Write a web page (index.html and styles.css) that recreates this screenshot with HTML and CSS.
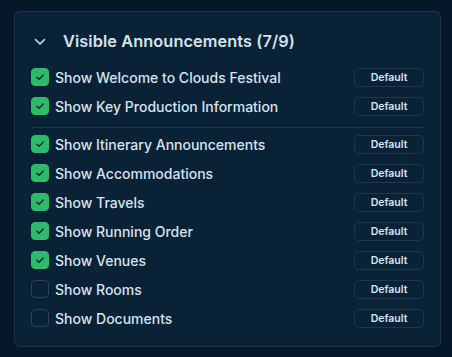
FILE: index.html
```html
<!DOCTYPE html>
<html>
<head>
<meta charset="utf-8">
<link rel="stylesheet" href="styles.css">
</head>
<body>
<section class="card">
  <header class="head">
    <svg class="chev" width="12" height="8" viewBox="0 0 12 8"><path d="M1.5 1.5 L6 6 L10.5 1.5" fill="none" stroke="#c9dcf0" stroke-width="1.6" stroke-linecap="round" stroke-linejoin="round"/></svg>
    <h2 class="title">Visible Announcements (7/9)</h2>
  </header>
  <div class="group">
    <div class="row"><span class="cb on"><svg viewBox="0 0 18 18"><path d="M5.5 9.2 L8 11.6 L12.6 6.8" fill="none" stroke="#0d2a22" stroke-width="1.6" stroke-linecap="round" stroke-linejoin="round"/></svg></span><span class="label">Show Welcome to Clouds Festival</span><button class="btn">Default</button></div>
    <div class="row"><span class="cb on"><svg viewBox="0 0 18 18"><path d="M5.5 9.2 L8 11.6 L12.6 6.8" fill="none" stroke="#0d2a22" stroke-width="1.6" stroke-linecap="round" stroke-linejoin="round"/></svg></span><span class="label">Show Key Production Information</span><button class="btn">Default</button></div>
  </div>
  <div class="sep"></div>
  <div class="group">
    <div class="row"><span class="cb on"><svg viewBox="0 0 18 18"><path d="M5.5 9.2 L8 11.6 L12.6 6.8" fill="none" stroke="#0d2a22" stroke-width="1.6" stroke-linecap="round" stroke-linejoin="round"/></svg></span><span class="label">Show Itinerary Announcements</span><button class="btn">Default</button></div>
    <div class="row"><span class="cb on"><svg viewBox="0 0 18 18"><path d="M5.5 9.2 L8 11.6 L12.6 6.8" fill="none" stroke="#0d2a22" stroke-width="1.6" stroke-linecap="round" stroke-linejoin="round"/></svg></span><span class="label">Show Accommodations</span><button class="btn">Default</button></div>
    <div class="row"><span class="cb on"><svg viewBox="0 0 18 18"><path d="M5.5 9.2 L8 11.6 L12.6 6.8" fill="none" stroke="#0d2a22" stroke-width="1.6" stroke-linecap="round" stroke-linejoin="round"/></svg></span><span class="label">Show Travels</span><button class="btn">Default</button></div>
    <div class="row"><span class="cb on"><svg viewBox="0 0 18 18"><path d="M5.5 9.2 L8 11.6 L12.6 6.8" fill="none" stroke="#0d2a22" stroke-width="1.6" stroke-linecap="round" stroke-linejoin="round"/></svg></span><span class="label">Show Running Order</span><button class="btn">Default</button></div>
    <div class="row"><span class="cb on"><svg viewBox="0 0 18 18"><path d="M5.5 9.2 L8 11.6 L12.6 6.8" fill="none" stroke="#0d2a22" stroke-width="1.6" stroke-linecap="round" stroke-linejoin="round"/></svg></span><span class="label">Show Venues</span><button class="btn">Default</button></div>
    <div class="row"><span class="cb"></span><span class="label">Show Rooms</span><button class="btn">Default</button></div>
    <div class="row"><span class="cb"></span><span class="label">Show Documents</span><button class="btn">Default</button></div>
  </div>
</section>
</body>
</html>
```
FILE: styles.css
```css
html, body {
  margin: 0;
  padding: 0;
  background: #051729;
  font-family: Inter, "Noto Sans", sans-serif;
  color: #d8e4f0;
}
body {
  padding: 11px 12px 10px 14px;
}
.card {
  box-sizing: border-box;
  width: 427px;
  height: 336px;
  background: #0a2236;
  border: 1px solid #1d3549;
  border-radius: 6px;
  padding: 17px 15px 0 16px;
}
.head {
  display: flex;
  align-items: center;
  height: 23px;
  margin-bottom: 10.5px;
}
.chev {
  margin-left: 3px;
  margin-top: 2px;
  width: 12px;
  height: 8px;
}
.title {
  margin: 0 0 0 17px;
  font-size: 16.3px;
  font-weight: 600;
  color: #d3e2f2;
  letter-spacing: 0.1px;
}
.group {
  display: flex;
  flex-direction: column;
}
.row {
  display: flex;
  align-items: center;
  height: 29px;
}
.cb {
  box-sizing: border-box;
  width: 18px;
  height: 18px;
  border-radius: 4px;
  border: 1px solid #2c4459;
  flex: none;
}
.cb.on {
  background: #2dba6c;
  border-color: #2dba6c;
}
.cb svg {
  display: block;
  width: 16px;
  height: 16px;
}
.label {
  margin-left: 6px;
  font-size: 14px;
  font-weight: 500;
  color: #d6e3f0;
  flex: 1;
}
.btn {
  box-sizing: border-box;
  width: 70px;
  height: 19px;
  margin-right: 1px;
  background: transparent;
  border: 1px solid #1f374c;
  border-radius: 5px;
  color: #d6e3f0;
  font-family: Inter, "Noto Sans", sans-serif;
  font-size: 10.5px;
  font-weight: 600;
  padding: 0;
}
.sep {
  height: 1px;
  background: #1d3549;
  margin: 6px 1px 2px 0;
}
```
